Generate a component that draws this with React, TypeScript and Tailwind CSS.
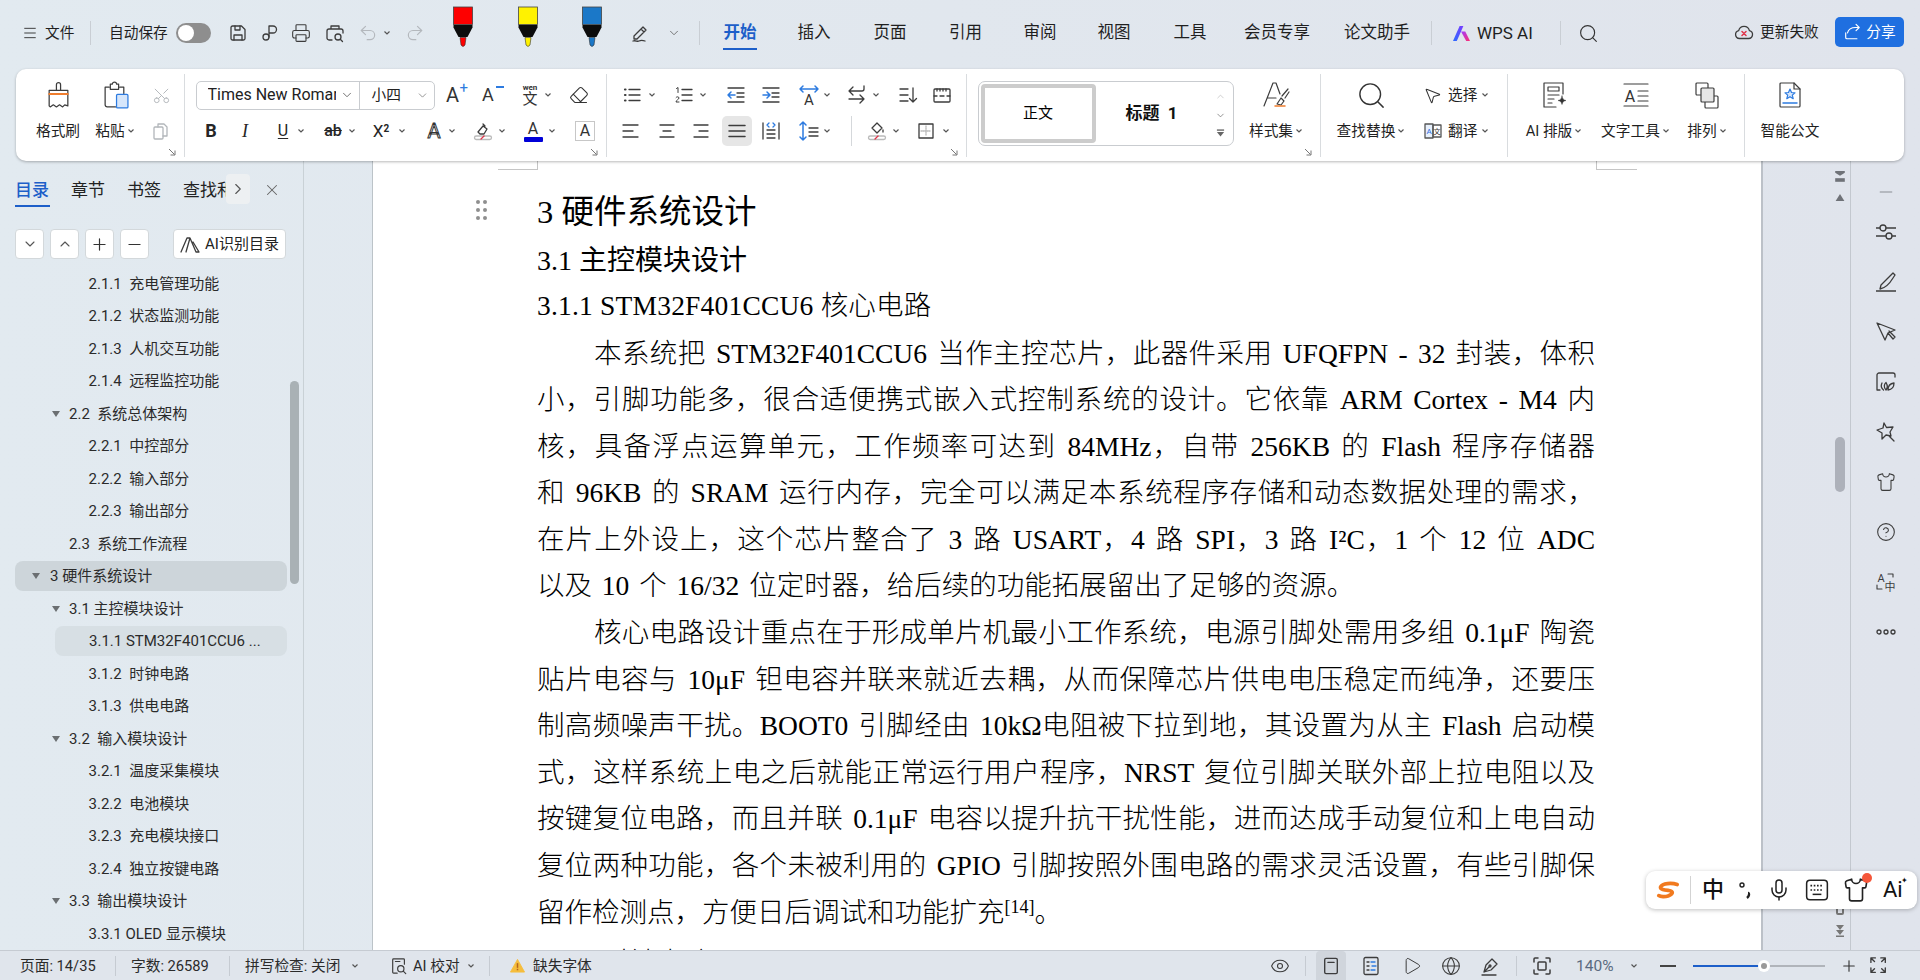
import React from 'react';
import { Menu, Scissors, Printer, Undo2, Redo2, Search, X, Plus, Minus, Eye, Globe, Play, Eraser, CircleHelp, Shirt, ChevronRight, ChevronDown, ChevronUp, MousePointer2, Mic } from 'lucide-react';

const ui = { fontFamily: 'Roboto,"Noto Sans CJK SC",sans-serif' };

function Ic({ c = '', vb = '0 0 20 20', sw = 1.3, stroke = '#3c3c3c', children }: { c?: string; vb?: string; sw?: number; stroke?: string; children: React.ReactNode }) {
  return <svg viewBox={vb} fill="none" stroke={stroke} strokeWidth={sw} strokeLinecap="round" strokeLinejoin="round" className={`shrink-0 ${c || 'w-[20px] h-[20px]'}`}>{children}</svg>;
}
function Chev({ c = '' }: { c?: string }) {
  return <svg viewBox="0 0 8 8" fill="none" stroke="#555" strokeWidth={1.2} className={`w-[8px] h-[8px] shrink-0 ${c}`}><path d="M1.5 2.5 4 5l2.5-2.5" /></svg>;
}
function Corner() {
  return <svg viewBox="0 0 8 8" fill="none" stroke="#777" strokeWidth={1} className="absolute right-[8px] bottom-[1px] w-[8px] h-[8px]"><path d="M1 1l5.5 5.5M7 2.5V7H2.5" /></svg>;
}
function Marker({ color, ml }: { color: string; ml: string }) {
  return (
    <svg viewBox="0 0 22 42" className={`w-[22px] h-[42px] shrink-0 mt-[-12px] ${ml}`}>
      <rect x="1.5" y="1" width="19" height="17.5" fill={color} stroke="#444" strokeWidth="0.8" />
      <path d="M1.5 19h19v2.5L15.5 31h-9L1.5 21.500z" fill="#0c0c0c" />
      <path d="M8 31.500h6L13 39q-2 3-4 0z" fill={color} stroke="#333" strokeWidth="0.6" />
    </svg>
  );
}
const Lab = 'text-[14.7px] leading-[20px] text-[#1f1f1f] whitespace-nowrap';
const Sep = 'w-px h-[24px] bg-[#c9ced4] shrink-0';

function TitleBar() {
  const tab = 'w-[34px] text-center text-[16.5px] leading-[24px] whitespace-nowrap shrink-0 flex justify-center text-[#1f1f1f]';
  return (
    <div className="h-[69px] pb-[3px] flex items-center shrink-0">
      <Menu className="ml-[22px] w-[16px] h-[16px] shrink-0 text-[#333]" strokeWidth={1.4} />
      <span className={`ml-[7px] w-[30px] ${Lab}`}>文件</span>
      <div className={`ml-[15px] ${Sep}`} />
      <span className={`ml-[18px] w-[59px] ${Lab}`}>自动保存</span>
      <div className="ml-[8px] w-[35px] h-[20px] rounded-full bg-[#8e8e8e] shrink-0 flex items-center pl-[2px]"><div className="w-[16px] h-[16px] rounded-full bg-white" /></div>
      <Ic c="ml-[17px] w-[20px] h-[20px]"><path d="M3 4.500A1.500 1.500 0 0 1 4.500 3h9L17 6.500v9a1.500 1.500 0 0 1-1.500 1.500h-11A1.500 1.500 0 0 1 3 15.500z" /><path d="M7 3v4h5V3M6 17v-5h8v5" /></Ic>
      <Ic c="ml-[12px] w-[20px] h-[20px]"><circle cx="6" cy="14" r="3" /><path d="M9 14V3h4a3.500 3.500 0 0 1 0 7H9" /></Ic>
      <Printer className="ml-[11px] w-[20px] h-[20px] shrink-0 text-[#3c3c3c]" strokeWidth={1.3} />
      <Ic c="ml-[14px] w-[20px] h-[20px]"><path d="M6 6V3h8v3M7 17H4a2 2 0 0 1-2-2V8a2 2 0 0 1 2-2h12a2 2 0 0 1 2 2v2" /><circle cx="13" cy="14" r="3" /><path d="m15.500 16.500 2 2" /></Ic>
      <Undo2 className="ml-[13px] w-[20px] h-[20px] shrink-0 text-[#b4b8bd]" strokeWidth={1.4} />
      <Chev c="ml-[5px]" />
      <Redo2 className="ml-[14px] w-[20px] h-[20px] shrink-0 text-[#b4b8bd]" strokeWidth={1.4} />
      <Marker color="#fe0000" ml="ml-[27px]" />
      <Marker color="#fff200" ml="ml-[43px]" />
      <Marker color="#1b78c8" ml="ml-[42px]" />
      <Ic c="ml-[27px] w-[20px] h-[20px]"><path d="M4 13 13 4l3 3-9 9H4zM11 6l3 3M3 18c3-1 4 1 6 0s3-1 6 0" /></Ic>
      <ChevronDown className="ml-[17px] w-[14px] h-[14px] shrink-0 text-[#666]" strokeWidth={1.5} />
      <div className={`ml-[18px] ${Sep}`} />
      <div className={`ml-[23px] relative font-semibold ${tab}`}><span className="text-[#1d5fc9]">开始</span><div className="absolute left-0 right-0 top-[27px] h-[2px] bg-[#1d5fc9]" /></div>
      <div className={`ml-[40px] ${tab}`}>插入</div>
      <div className={`ml-[42px] ${tab}`}>页面</div>
      <div className={`ml-[41.500px] ${tab}`}>引用</div>
      <div className={`ml-[40.500px] ${tab}`}>审阅</div>
      <div className={`ml-[40px] ${tab}`}>视图</div>
      <div className={`ml-[42px] ${tab}`}>工具</div>
      <div className="ml-[36px] w-[68px] text-[16.5px] leading-[24px] text-center whitespace-nowrap shrink-0 text-[#1f1f1f]">会员专享</div>
      <div className="ml-[32px] w-[68px] text-[16.5px] leading-[24px] text-center whitespace-nowrap shrink-0 text-[#1f1f1f]">论文助手</div>
      <div className={`ml-[20px] ${Sep}`} />
      <svg viewBox="0 0 20 18" className="ml-[20px] w-[19px] h-[17px] shrink-0">
        <defs><linearGradient id="wa" x1="0" y1="1" x2="1" y2="0"><stop offset="0" stopColor="#2a6bff" /><stop offset="1" stopColor="#7a3cff" /></linearGradient><linearGradient id="wb" x1="0" y1="0" x2="1" y2="1"><stop offset="0" stopColor="#a03cff" /><stop offset="1" stopColor="#ff2d6f" /></linearGradient></defs>
        <path d="M1 17 8 1h4L5 17z" fill="url(#wa)" /><path d="M9.500 7 14 7 19 17h-4z" fill="url(#wb)" />
      </svg>
      <span className="ml-[6px] w-[59px] text-[17px] leading-[22px] whitespace-nowrap shrink-0 text-[#1f1f1f]">WPS AI</span>
      <div className={`ml-[24px] ${Sep}`} />
      <Search className="ml-[17px] w-[21px] h-[21px] shrink-0 text-[#333]" strokeWidth={1.3} />
      <div className="ml-auto mr-[16px] flex items-center mt-[-2px]">
        <Ic c="w-[20px] h-[20px]" vb="0 0 20 20"><path d="M5.500 16.500a4 4 0 0 1-.8-7.900 5.500 5.500 0 0 1 10.700 0 4 4 0 0 1-.8 7.900z" /><path d="m8 9.500 4 4m0-4-4 4" stroke="#e0354b" strokeWidth="1.5" /></Ic>
        <span className={`ml-[6px] w-[60px] ${Lab}`}>更新失败</span>
        <div className="ml-[15px] w-[69px] h-[30px] rounded-[5px] bg-[#1f6fe0] flex items-center justify-center text-white">
          <Ic c="w-[18px] h-[18px]" stroke="#fff" vb="0 0 20 20"><path d="M3 11v5a1.500 1.500 0 0 0 1.500 1.500h11M5 11c1-4 4-6 9-6h4M14.500 1.500 18 5l-3.500 3.500" /></Ic>
          <span className="ml-[5px] text-[14.7px] leading-[20px] whitespace-nowrap">分享</span>
        </div>
      </div>
    </div>
  );
}

function Ribbon() {
  const group = 'relative h-[83px] mt-[5px] border-r border-[#d9dcdf] shrink-0 pt-[3px]';
  const row = 'h-[36px] flex items-center';
  const col = 'shrink-0 flex flex-col items-center';
  const big = 'h-[36px] flex items-center justify-center';
  const bigLab = 'h-[36px] flex items-center justify-center whitespace-nowrap text-[14.7px] text-[#1f1f1f]';
  const serifText = 'w-[20px] text-center shrink-0 leading-[22px] text-[#262626]';
  return (
    <div className="ml-[16px] w-[1888px] h-[92px] bg-white rounded-[10px] flex shrink-0 relative z-10 shadow-[0_1px_3px_rgba(0,0,0,0.28)]">
      {/* clipboard */}
      <div className={`${group} w-[169px] flex`}>
        <div className={`${col} w-[56px] ml-[14px]`}>
          <div className={big}><Ic c="w-[25px] h-[28px]" vb="0 0 24 27" sw={1.2}><path d="M10 9V3.500a2 2 0 0 1 4 0V9" /><path d="M3 9h18v15l-3-1-2 2-3-2-3 2-3-2-3 2-1-1z" /><path d="M3 12.500h18" stroke="#ef7d2e" strokeWidth="1.8" /></Ic></div>
          <div className={bigLab}>格式刷</div>
        </div>
        <div className={`${col} w-[56px] ml-[1px]`}>
          <div className={big}><Ic c="w-[27px] h-[28px]" vb="0 0 26 27" sw={1.2}><path d="M13 25H5a2 2 0 0 1-2-2V6h4M17 6h4v6" /><path d="M8 3h2a2 2 0 0 1 4 0h2v5H8z" /><rect x="14" y="13" width="11" height="13" rx="1" fill="#d6e6fb" stroke="#2d7be0" /></Ic></div>
          <div className={bigLab}>粘贴<Chev c="ml-[2px]" /></div>
        </div>
        <div className={`${col} w-[20px] ml-[8px]`}>
          <div className={big}><Scissors className="w-[19px] h-[19px] text-[#b2b6ba] -rotate-90" strokeWidth={1.2} /></div>
          <div className={big}><Ic stroke="#b2b6ba"><path d="M7 6V3h6l3 3v9h-4" /><rect x="3" y="6" width="9" height="12" rx="1" /></Ic></div>
        </div>
        <Corner />
      </div>
      {/* font */}
      <div className={`${group} w-[422px]`}>
        <div className={row}>
          <div className="ml-[10.500px] w-[239.500px] h-[29px] border border-[#c9ccd0] rounded-[5px] flex items-center shrink-0">
            <span className="ml-[11px] w-[128px] overflow-hidden whitespace-nowrap text-[16px] text-[#222]">Times New Roman</span>
            <ChevronDown className="ml-[4px] w-[14px] h-[14px] text-[#555] shrink-0" strokeWidth={1.4} />
            <div className="ml-[5px] w-px h-full bg-[#c9ccd0]" />
            <span className="ml-[12px] text-[14.7px] whitespace-nowrap text-[#222]">小四</span>
            <ChevronDown className="ml-[15px] w-[13px] h-[13px] text-[#777] shrink-0" strokeWidth={1.4} />
          </div>
          <div className="ml-[11px] w-[22px] flex items-start shrink-0 relative h-[22px]"><span className="text-[20px] leading-[22px] text-[#333]">A</span><span className="absolute right-[0px] top-[-3px] text-[15px] leading-[15px] text-[#2d7be0]">+</span></div>
          <div className="ml-[14px] w-[22px] flex items-start shrink-0 relative h-[22px]"><span className="text-[18px] leading-[22px] text-[#333]">A</span><span className="absolute right-[0px] top-[2px] w-[8px] h-[2px] bg-[#2d7be0]" /></div>
          <div className="ml-[15px] w-[22px] flex flex-col items-center shrink-0 leading-none text-[#333]"><span className="text-[8px] leading-[8px] font-bold">wen</span><span className="text-[15px] leading-[15px]">文</span></div>
          <Chev c="ml-[3px]" />
          <Eraser className="ml-[17px] w-[20px] h-[20px] shrink-0 text-[#333]" strokeWidth={1.3} />
        </div>
        <div className={row}>
          <span className={`ml-[16px] font-bold text-[18px] ${serifText}`}>B</span>
          <span className={`ml-[14px] italic text-[18px] ${serifText}`} style={{ fontFamily: '"Liberation Serif",serif' }}>I</span>
          <span className={`ml-[18px] text-[16px] underline underline-offset-2 ${serifText}`}>U</span>
          <Chev c="ml-[4px]" />
          <span className={`ml-[18px] text-[16px] line-through font-medium ${serifText}`}>ab</span>
          <Chev c="ml-[5px]" />
          <span className={`ml-[13px] text-[17px] w-[24px] text-center shrink-0 leading-[22px] text-[#262626]`}>X<sup className="text-[10px] font-bold">2</sup></span>
          <Chev c="ml-[5px]" />
          <div className="ml-[18px] w-[20px] h-[22px] shrink-0 relative flex justify-center"><span className="text-[20px] leading-[22px] text-white [-webkit-text-stroke:1px_#333]">A</span></div>
          <Chev c="ml-[4px]" />
          <Ic c="ml-[17px] w-[20px] h-[20px]"><path d="m5 11 5-6 4 3-3 5H7zM10 3l2 2" /><rect x="1.500" y="15" width="17" height="3.500" rx="1.750" stroke="#bbb" /><path d="m8 18 3-3" stroke="#e0354b" /></Ic>
          <Chev c="ml-[5px]" />
          <div className="ml-[17px] w-[20px] flex flex-col items-center shrink-0"><span className="text-[16px] leading-[16px] text-[#333]">A</span><div className="w-[19px] h-[5px] rounded-[1px] bg-[#0000d8]" /></div>
          <Chev c="ml-[5px]" />
          <div className="ml-[19px] w-[20px] h-[20px] border border-[#c7c7c7] shrink-0 flex items-center justify-center text-[16px] leading-[18px] text-[#333]">A</div>
        </div>
        <Corner />
      </div>
      {/* paragraph */}
      <div className={`${group} w-[360px]`}>
        <div className={row}>
          <Ic c="ml-[15px] w-[20px] h-[20px]"><path d="M7 4.500h11M7 10h11M7 15.500h11" /><path d="M3 4.500h.5M3 10h.5M3 15.500h.5" strokeWidth="2.200" /></Ic>
          <Chev c="ml-[6px]" />
          <Ic c="ml-[18px] w-[20px] h-[20px]"><path d="M8 4.500h10M8 10h10M8 15.500h10" /><path d="M2.500 3.500l1.500-1v5" strokeWidth="1" /><path d="M2 12.500c.5-1 3-1 3 .5s-3 2-3 4h3" strokeWidth="1" /></Ic>
          <Chev c="ml-[5px]" />
          <Ic c="ml-[19px] w-[20px] h-[20px]"><path d="M2 3h16M2 17h16M11 8h7M11 12h7" /><path d="M9 10H2m3-3-3 3 3 3" stroke="#2d7be0" strokeWidth="1.5" /></Ic>
          <Ic c="ml-[15px] w-[20px] h-[20px]"><path d="M2 3h16M2 17h16M11 8h7M11 12h7" /><path d="M2 10h7M6 7l3 3-3 3" stroke="#2d7be0" strokeWidth="1.5" /></Ic>
          <Ic c="ml-[17px] w-[22px] h-[22px]" vb="0 0 22 22"><path d="M2 5h18M5 2 2 5l3 3M17 2l3 3-3 3" stroke="#2d7be0" strokeWidth="1.5" /><text x="11" y="20.500" textAnchor="middle" fontSize="15" fill="#333" stroke="none" fontFamily="Roboto">A</text></Ic>
          <Chev c="ml-[3px]" />
          <Ic c="ml-[15px] w-[22px] h-[22px]" vb="0 0 22 22"><path d="M3 7h13a2 2 0 0 0 2-2V2M7 3 3 7l4 4M3 15h15m-4-4 4 4-4 4" /></Ic>
          <Chev c="ml-[4px]" />
          <Ic c="ml-[18px] w-[20px] h-[20px]"><path d="M2 4h8M2 10h8M2 16h8M15 3v14m-3.500-3.500L15 17l3.500-3.500" /></Ic>
          <Ic c="ml-[14px] w-[20px] h-[20px]"><rect x="2" y="4" width="16" height="13" rx="1" /><path d="M5 4v2M8 4v2M11 4v2M14 4v2M2 11h3M15 11h3M8 11h4" /></Ic>
        </div>
        <div className={row}>
          <Ic c="ml-[14px] w-[20px] h-[20px]"><path d="M2 4h15M2 10h10M2 16h15" /></Ic>
          <Ic c="ml-[15.500px] w-[20px] h-[20px]"><path d="M3 4h14M6 10h8M3 16h14" /></Ic>
          <Ic c="ml-[14.500px] w-[20px] h-[20px]"><path d="M3 4h14M8 10h9M3 16h14" /></Ic>
          <div className="ml-[11px] w-[29.500px] h-[30px] rounded-[5px] bg-[#e6e6e6] flex items-center justify-center shrink-0"><Ic sw={1.5}><path d="M2 4.500h16M2 10h16M2 15.500h16" /></Ic></div>
          <Ic c="ml-[9.500px] w-[20px] h-[20px]"><path d="M2 2v16M18 2v16M6 9h8M6 13h8M6 17h8" /><path d="M8 2 6 4l2 2M12 2l2 2-2 2" stroke="#2d7be0" /></Ic>
          <Ic c="ml-[17px] w-[22px] h-[22px]" vb="0 0 22 22"><path d="M11 8h9M11 12h9M11 16h9" /><path d="M5 2v18M2 5l3-3 3 3M2 17l3 3 3-3" stroke="#2d7be0" strokeWidth="1.500" /></Ic>
          <Chev c="ml-[3px]" />
          <div className="ml-[19.500px] w-px h-[30px] bg-[#d5d8db] shrink-0" />
          <Ic c="ml-[15px] w-[20px] h-[20px]"><path d="m5 7 5-5 5 5-5 5zM16 9v2" /><rect x="1.500" y="15" width="17" height="3.500" rx="1.750" stroke="#bbb" /><path d="m8 18 3-3" stroke="#e0354b" /></Ic>
          <Chev c="ml-[5px]" />
          <Ic c="ml-[16.500px] w-[20px] h-[20px]"><rect x="3" y="3" width="14" height="14" /><path d="M10 5v10M5 10h10" stroke="#bbb" strokeDasharray="1 1" /></Ic>
          <Chev c="ml-[5.500px]" />
        </div>
        <Corner />
      </div>
      {/* styles */}
      <div className={`${group} w-[354px] flex`}>
        <div className="ml-[10.500px] mt-[4px] w-[256.500px] h-[65px] border border-[#c9ccd0] rounded-[7px] flex items-center shrink-0 pl-[2px]">
          <div className="w-[115px] h-[59px] border-[4px] border-[#cccccc] rounded-[4px] flex items-center justify-center text-[15px] text-black" style={{ fontFamily: '"Liberation Serif","Noto Sans CJK SC",serif' }}>正文</div>
          <div className="w-[112px] text-center text-[17px] font-bold text-[#111] whitespace-pre shrink-0">标题  1</div>
          <div className="flex-1 flex flex-col items-center gap-[8px]">
            <ChevronUp className="w-[11px] h-[11px] text-[#bbb]" strokeWidth={1.5} />
            <ChevronDown className="w-[11px] h-[11px] text-[#666]" strokeWidth={1.5} />
            <svg viewBox="0 0 10 8" className="w-[9px] h-[8px]" fill="#666"><rect x="1" y="0" width="8" height="1.500" /><path d="M1 3h8L5 8z" /></svg>
          </div>
        </div>
        <div className={`${col} w-[70px] ml-[7px]`}>
          <div className={big}><Ic c="w-[30px] h-[30px]" vb="0 0 30 30" sw={1.2}><path d="M3 26 12 3h3l4 11M7 18h8" /><path d="m16 24 4-6 3 3-3 4zM21 16 27 9M24 18l4-6" /><path d="M14 26h10" stroke="#ef7d2e" strokeWidth="1.500" /></Ic></div>
          <div className={bigLab}>样式集<Chev c="ml-[2px]" /></div>
        </div>
        <Corner />
      </div>
      {/* find */}
      <div className={`${group} w-[187px] flex`}>
        <div className={`${col} w-[76px] ml-[12px]`}>
          <div className={big}><Search className="w-[31px] h-[31px] text-[#333]" strokeWidth={1.1} /></div>
          <div className={bigLab}>查找替换<Chev c="ml-[2px]" /></div>
        </div>
        <div className="ml-[14px] shrink-0">
          <div className={row}><MousePointer2 className="w-[19px] h-[19px] text-[#333] shrink-0" strokeWidth={1.3} /><span className={`ml-[6px] ${Lab}`}>选择</span><Chev c="ml-[4px]" /></div>
          <div className={row}><Ic c="w-[20px] h-[20px]"><rect x="2" y="3" width="8" height="14" fill="#e7f0fc" stroke="#555" /><rect x="10" y="4" width="8" height="12" stroke="#555" /><text x="6" y="13" textAnchor="middle" fontSize="8" fill="#2d6be0" stroke="none" fontFamily="Roboto">A</text><text x="14" y="13" textAnchor="middle" fontSize="7" fill="#333" stroke="none" fontFamily="Noto Sans CJK SC">文</text></Ic><span className={`ml-[5px] ${Lab}`}>翻译</span><Chev c="ml-[4px]" /></div>
        </div>
      </div>
      {/* tools */}
      <div className={`${group} w-[237px] flex`}>
        <div className={`${col} w-[64px] ml-[14px]`}>
          <div className={big}><Ic c="w-[26px] h-[28px]" vb="0 0 26 28" sw={1.2}><path d="M22 13V2H3v24h12" /><rect x="7" y="6" width="11" height="4" /><path d="M7 14h11M7 18h6M7 22h4" /><path d="M21 15c.5 3 1.500 4 4 4.500-2.500.5-3.500 1.500-4 4-.5-2.500-1.500-3.500-4-4 2.500-.5 3.500-1.500 4-4.500z" fill="#333" strokeWidth="0.5" /></Ic></div>
          <div className={bigLab}>AI 排版<Chev c="ml-[2px]" /></div>
        </div>
        <div className={`${col} w-[75px] ml-[12px]`}>
          <div className={big}><Ic c="w-[26px] h-[26px]" vb="0 0 26 26" sw={1.2}><path d="M1 2h24M1 24h24M15 9h10M15 14h10M15 19h10" /><text x="7" y="20" textAnchor="middle" fontSize="16" fill="#333" stroke="none" fontFamily="Roboto">A</text></Ic></div>
          <div className={bigLab}>文字工具<Chev c="ml-[2px]" /></div>
        </div>
        <div className={`${col} w-[44px] ml-[12px]`}>
          <div className={big}><Ic c="w-[26px] h-[28px]" vb="0 0 26 28" sw={1.2}><rect x="2" y="2" width="12" height="12" rx="1" /><rect x="11" y="15" width="13" height="12" rx="1" /><rect x="7" y="7" width="13" height="14" rx="1" fill="#e6e6e6" /></Ic></div>
          <div className={bigLab}>排列<Chev c="ml-[2px]" /></div>
        </div>
      </div>
      {/* ai doc */}
      <div className="mt-[5px] pt-[3px] shrink-0 ml-[13px] w-[64px] flex flex-col items-center">
        <div className={big}><Ic c="w-[24px] h-[28px]" vb="0 0 24 28" sw={1.2}><path d="M16 2H3a1 1 0 0 0-1 1v22a1 1 0 0 0 1 1h18a1 1 0 0 0 1-1V8z" /><path d="M16 2v6h6" /><path d="m12 8 1.500 3.500 3.500.3-2.700 2.300.9 3.600-3.200-2-3.200 2 .9-3.600L7 11.800l3.500-.3z" stroke="#2d7be0" fill="#d6e6fb" /><path d="M5 22h14" stroke="#2d7be0" strokeWidth="1.500" /></Ic></div>
        <div className={bigLab}>智能公文</div>
      </div>
    </div>
  );
}

type TreeItem = { t: string; lvl: 0 | 1 | 2; tri?: boolean; sel?: boolean };
const tree: TreeItem[] = [
  { t: '2.1.1  充电管理功能', lvl: 2 }, { t: '2.1.2  状态监测功能', lvl: 2 }, { t: '2.1.3  人机交互功能', lvl: 2 }, { t: '2.1.4  远程监控功能', lvl: 2 },
  { t: '2.2  系统总体架构', lvl: 1, tri: true }, { t: '2.2.1  中控部分', lvl: 2 }, { t: '2.2.2  输入部分', lvl: 2 }, { t: '2.2.3  输出部分', lvl: 2 },
  { t: '2.3  系统工作流程', lvl: 1 }, { t: '3 硬件系统设计', lvl: 0, tri: true, sel: true }, { t: '3.1 主控模块设计', lvl: 1, tri: true },
  { t: '3.1.1 STM32F401CCU6 ...', lvl: 2, sel: true }, { t: '3.1.2  时钟电路', lvl: 2 }, { t: '3.1.3  供电电路', lvl: 2 },
  { t: '3.2  输入模块设计', lvl: 1, tri: true }, { t: '3.2.1  温度采集模块', lvl: 2 }, { t: '3.2.2  电池模块', lvl: 2 }, { t: '3.2.3  充电模块接口', lvl: 2 }, { t: '3.2.4  独立按键电路', lvl: 2 },
  { t: '3.3  输出模块设计', lvl: 1, tri: true }, { t: '3.3.1 OLED 显示模块', lvl: 2 },
];
function Tri({ c }: { c: string }) {
  return <svg viewBox="0 0 8 6" fill="#6b6f72" className={`w-[8px] h-[6px] shrink-0 ${c}`}><path d="M0 0h8L4 6z" /></svg>;
}
function TreeRow({ it }: { it: TreeItem }) {
  const txt = 'text-[15px] leading-[20px] text-[#2b2b2b] whitespace-pre';
  let inner: React.ReactNode;
  if (it.lvl === 0) inner = <div className="ml-[15px] w-[272px] h-[30px] rounded-[8px] bg-[#cdd5da] flex items-center"><Tri c="ml-[17px]" /><span className={`ml-[10px] ${txt}`}>{it.t}</span></div>;
  else if (it.lvl === 1) inner = <div className="flex items-center">{it.tri ? <Tri c="ml-[52px]" /> : <div className="w-[60px] shrink-0" />}<span className={`ml-[9px] ${txt}`}>{it.t}</span></div>;
  else if (it.sel) inner = <div className="ml-[55px] w-[232px] h-[30px] rounded-[8px] bg-[#d7dfe4] flex items-center"><span className={`ml-[34px] ${txt}`}>{it.t}</span></div>;
  else inner = <span className={`ml-[88.500px] ${txt}`}>{it.t}</span>;
  return <div className="h-[32.500px] flex items-center shrink-0">{inner}</div>;
}
function Sidebar() {
  const btn = 'w-[29px] h-[30px] bg-white border border-[#d3d8db] rounded-[4px] flex items-center justify-center shrink-0';
  const tab = 'text-[17px] leading-[24px] whitespace-nowrap shrink-0 text-[#222]';
  return (
    <div className="relative w-[304px] shrink-0 border-r border-[#c9d1d6] overflow-hidden flex flex-col">
      <div className="h-[46px] pt-[13px] flex shrink-0">
        <div className={`ml-[15px] w-[35px] h-[33px] border-b-2 border-[#1d5fc9] pt-[4px] font-medium ${tab}`}><span className="text-[#1d5fc9]">目录</span></div>
        <div className={`ml-[21px] pt-[4px] ${tab}`}>章节</div>
        <div className={`ml-[22px] pt-[4px] ${tab}`}>书签</div>
        <div className={`ml-[22px] pt-[4px] w-[43px] overflow-hidden ${tab}`}>查找和替换</div>
        <div className="w-[24px] h-[30px] rounded-[4px] bg-[#edf0f2] flex items-center justify-center shrink-0"><ChevronRight className="w-[18px] h-[18px] text-[#555]" strokeWidth={1.5} /></div>
        <X className="ml-[13px] mt-[7px] w-[18px] h-[18px] shrink-0 text-[#666]" strokeWidth={1.4} />
      </div>
      <div className="mt-[22px] ml-[15px] flex gap-[6px] shrink-0">
        <div className={btn}><ChevronDown className="w-[16px] h-[16px] text-[#555]" strokeWidth={1.6} /></div>
        <div className={btn}><ChevronUp className="w-[16px] h-[16px] text-[#555]" strokeWidth={1.6} /></div>
        <div className={btn}><Plus className="w-[19px] h-[19px] text-[#333]" strokeWidth={1.5} /></div>
        <div className={btn}><Minus className="w-[19px] h-[19px] text-[#333]" strokeWidth={1.5} /></div>
        <div className="ml-[18px] w-[113px] h-[30px] bg-white border border-[#d3d8db] rounded-[4px] flex items-center justify-center shrink-0">
          <Ic c="w-[20px] h-[17px]" vb="0 0 20 17" sw={1.3}><path d="M1 16 7 2h3l6 14M10 2 6 16M16 16h3L13 6" /></Ic>
          <span className="ml-[5px] text-[15px] leading-[20px] whitespace-nowrap text-[#222]">AI识别目录</span>
        </div>
      </div>
      <div className="mt-[8.500px] flex flex-col">{tree.map((it) => <TreeRow key={it.t} it={it} />)}</div>
      <div className="absolute left-[290px] top-[220px] w-[9px] h-[203px] rounded-full bg-[#a9b1b5]" />
    </div>
  );
}

const lines: string[] = [
  '本系统把 STM32F401CCU6 当作主控芯片，此器件采用 UFQFPN - 32 封装，体积',
  '小，引脚功能多，很合适便携式嵌入式控制系统的设计。它依靠 ARM Cortex - M4 内',
  '核，具备浮点运算单元，工作频率可达到 84MHz，自带 256KB 的 Flash 程序存储器',
  '和 96KB 的 SRAM 运行内存，完全可以满足本系统程序存储和动态数据处理的需求，',
  '在片上外设上，这个芯片整合了 3 路 USART，4 路 SPI，3 路 I²C，1 个 12 位 ADC',
];
const lines2: string[] = [
  '贴片电容与 10μF 钽电容并联来就近去耦，从而保障芯片供电电压稳定而纯净，还要压',
  '制高频噪声干扰。BOOT0 引脚经由 10kΩ电阻被下拉到地，其设置为从主 Flash 启动模',
  '式，这样系统上电之后就能正常运行用户程序，NRST 复位引脚关联外部上拉电阻以及',
  '按键复位电路，而且并联 0.1μF 电容以提升抗干扰性能，进而达成手动复位和上电自动',
  '复位两种功能，各个未被利用的 GPIO 引脚按照外围电路的需求灵活设置，有些引脚保',
];
function Page() {
  const ln = 'h-[46.600px] leading-[46.600px] whitespace-nowrap';
  const just = `${ln} text-justify [text-align-last:justify]`;
  return (
    <div className="relative w-[1388px] shrink-0 bg-white overflow-hidden pl-[164px] pr-[166px] text-black font-light" style={{ fontFamily: '"Liberation Serif","Noto Sans CJK SC",serif' }}>
      <div className="absolute left-[125px] top-[0px] w-[40px] h-[9px] border-b border-r border-[#c5c5c5]" />
      <div className="absolute left-[1223px] top-[0px] w-[41px] h-[9px] border-b border-l border-[#c5c5c5]" />
      <div className="absolute left-[103px] top-[39px] grid grid-cols-2 gap-x-[3px] gap-y-[4px]">
        {[0, 1, 2, 3, 4, 5].map((i) => <div key={i} className="w-[4px] h-[4px] rounded-full bg-[#8f8f8f]" />)}
      </div>
      <div className="mt-[28px] h-[46px] leading-[46px] text-[32.500px] font-normal">3 硬件系统设计</div>
      <div className="mt-[3px] h-[46px] leading-[46px] text-[28px] font-normal">3.1 主控模块设计</div>
      <div className="h-[44px] leading-[44px] text-[27.500px] tracking-[0.2px] whitespace-pre">3.1.1 STM32F401CCU6 核心电路</div>
      <div className="mt-[2.500px] text-[27.500px] [word-spacing:3px]">
        <div className={`${just} indent-[57px]`}>{lines[0]}</div>
        {lines.slice(1).map((l, i) => <div key={i} className={just}>{l}</div>)}
        <div className={ln}>以及 10 个 16/32 位定时器，给后续的功能拓展留出了足够的资源。</div>
        <div className={`${just} indent-[57px]`}>核心电路设计重点在于形成单片机最小工作系统，电源引脚处需用多组 0.1μF 陶瓷</div>
        {lines2.map((l, i) => <div key={i} className={just}>{l}</div>)}
        <div className={ln}>留作检测点，方便日后调试和功能扩充<sup className="text-[18px] leading-none">[14]</sup>。</div>
        <div className={`${ln} mt-[4px]`}>3.1.2 时钟电路</div>
      </div>
    </div>
  );
}

function RightStrip() {
  const g = 'w-[14px] h-[12px] shrink-0';
  return (
    <div className="relative w-[89px] shrink-0 border-l-2 border-[#bcc1c8] flex flex-col items-center">
      <div className="ml-[66px] flex flex-col items-center">
        <svg viewBox="0 0 10 10" className={`mt-[10px] ${g}`} fill="#6f7278"><path d="M1 0h8v1.500L5 4 1 1.500z" /><rect x="1" y="6" width="8" height="3" /></svg>
        <svg viewBox="0 0 10 8" className="mt-[11px] w-[10px] h-[7px] shrink-0" fill="#6f7278"><path d="M5 0l5 8H0z" /></svg>
        <div className="mt-[236px] w-[10px] h-[55px] rounded-full bg-[#adb1ba]" />
        <div className="mt-[415px] w-[8px] h-[8px] border-2 border-[#777] rounded-[2px]" />
        <svg viewBox="0 0 10 12" className="mt-[10px] w-[10px] h-[12px]" fill="#777"><path d="M1 0h8L5 5zM1 5h8l-4 5z" /><rect x="1" y="10.500" width="8" height="1.500" /></svg>
      </div>
    </div>
  );
}
function RightRail() {
  const items = 'mt-[30px]';
  return (
    <div className="w-[70px] shrink-0 border-l border-[#c3c8cf] flex flex-col items-center pt-[21px]">
      <Minus className="w-[20px] h-[20px] text-[#8a8e94]" strokeWidth={1.2} />
      <Ic c="mt-[20px] w-[20px] h-[20px]"><path d="M0 6h4M10 6h10M0 14h10M16 14h4" /><circle cx="7" cy="6" r="3" /><circle cx="13" cy="14" r="3" /></Ic>
      <Ic c={`${items} w-[20px] h-[20px]`}><path d="M0 19h20M4 17c6-1 10-6 13-11l2-3-2-2-2 2-10 10z" /></Ic>
      <Ic c={`${items} w-[20px] h-[20px]`}><path d="M1 1l18 7-7 3-3 7zM12 11l5 6 2-2-6-6" /></Ic>
      <Ic c={`${items} w-[20px] h-[20px]`}><path d="M1 18V3c0-1 1-2 2-2h14c1 0 2 1 2 2v2M1 18h3" /><path d="M10 18c-2.500-2.500-2-6 0-7.500 1.500 2.500 2 5 0 7.500zm2 0c0-4 2-6.500 6-7 0 4-2 6.500-6 7zM7.500 18C5 16 5 13 6 11" /></Ic>
      <Ic c={`${items} w-[20px] h-[20px]`}><path d="M8 1l2.500 4.500L17 5l-3 5 1 4-5-1-4 4v-6L1 8l6-2zM13 14l5 5" /></Ic>
      <Shirt className={`${items} w-[20px] h-[20px] text-[#3c3c3c]`} strokeWidth={1.3} />
      <CircleHelp className={`${items} w-[20px] h-[20px] text-[#3c3c3c]`} strokeWidth={1.3} />
      <Ic c={`${items} w-[20px] h-[20px]`} sw={1.1}><path d="M12 2h5v3M1 13v4h5" /><text x="5" y="10" textAnchor="middle" fontSize="11" fill="#3c3c3c" stroke="none" fontFamily="Roboto">A</text><text x="14" y="19" textAnchor="middle" fontSize="11" fill="#3c3c3c" stroke="none" fontFamily="Noto Sans CJK SC">中</text></Ic>
      <Ic c={`${items} w-[20px] h-[20px]`}><circle cx="3" cy="10" r="2" /><circle cx="10" cy="10" r="2" /><circle cx="17" cy="10" r="2" /></Ic>
    </div>
  );
}
function StatusBar() {
  const t = 'text-[14.7px] leading-[20px] whitespace-nowrap text-[#2b2b2b] shrink-0';
  const d = 'w-px h-[20px] bg-[#c6cbd2] shrink-0';
  return (
    <div className="relative z-10 h-[30px] bg-[#e0e5ec] border-t border-[#c6cbd2] flex items-center shrink-0">
      <span className={`ml-[20px] w-[80px] ${t}`}>页面: 14/35</span>
      <div className={`ml-[15px] ${d}`} />
      <span className={`ml-[15px] w-[83px] ${t}`}>字数: 26589</span>
      <div className={`ml-[15px] ${d}`} />
      <span className={`ml-[15px] w-[100px] ${t}`}>拼写检查: 关闭</span>
      <Chev c="ml-[6px]" />
      <Ic c="ml-[31px] w-[18px] h-[20px]"><path d="M8 18H4a1 1 0 0 1-1-1V3a1 1 0 0 1 1-1h11a1 1 0 0 1 1 1v5M6 5h5" /><circle cx="12" cy="13" r="3.500" /><path d="m15 16 2.500 2.500" /></Ic>
      <span className={`ml-[5px] w-[50px] ${t}`}>AI 校对</span>
      <Chev c="ml-[4px]" />
      <div className={`ml-[14px] ${d}`} />
      <svg viewBox="0 0 16 15" className="ml-[20px] w-[15px] h-[15px] shrink-0"><path d="M8 1 15.500 14.500H.5z" fill="#f5bd3d" stroke="#f5bd3d" strokeLinejoin="round" /><rect x="7.200" y="5" width="1.600" height="5" fill="#b5651d" /><rect x="7.200" y="11" width="1.600" height="1.600" fill="#b5651d" /></svg>
      <span className={`ml-[8px] ${t}`}>缺失字体</span>
      <div className="ml-auto mr-[32px] h-full flex items-center">
        <Eye className="w-[20px] h-[20px] text-[#3c3c3c]" strokeWidth={1.3} />
        <div className={`ml-[15px] ${d}`} />
        <div className="ml-[10px] w-[30px] h-full rounded-t-[4px] bg-[#d0d5dc] flex items-center justify-center shrink-0"><Ic c="w-[18px] h-[20px]"><rect x="3" y="1.500" width="14" height="17" rx="1.500" strokeWidth="1.500" /><path d="M6.500 6h7" /></Ic></div>
        <Ic c="ml-[15px] w-[20px] h-[20px]"><rect x="3" y="1.500" width="14" height="17" rx="1.500" /><path d="M6 6h2M6 10h2M6 14h2" /><path d="M10 6h4M11 10h4M10 14h4" stroke="#2d7be0" /></Ic>
        <Play className="ml-[21px] w-[20px] h-[20px] text-[#3c3c3c]" strokeWidth={1.2} />
        <Globe className="ml-[19px] w-[20px] h-[20px] text-[#3c3c3c]" strokeWidth={1.3} />
        <Ic c="ml-[20px] w-[20px] h-[20px]"><path d="M3 16 5 9l6-6 5 5-6 6zM3 16l5-5M1 19h14" /><circle cx="9" cy="10" r="1" /></Ic>
        <div className={`ml-[15px] ${d}`} />
        <Ic c="ml-[15px] w-[20px] h-[20px]" sw={1.5}><path d="M2 6V3a1 1 0 0 1 1-1h3M14 2h3a1 1 0 0 1 1 1v3M18 14v3a1 1 0 0 1-1 1h-3M6 18H3a1 1 0 0 1-1-1v-3" /><rect x="6" y="6" width="8" height="8" rx="1" /></Ic>
        <span className="ml-[24px] w-[40px] text-[15.5px] leading-[20px] text-[#5a6a80] shrink-0">140%</span>
        <Chev c="ml-[14px]" />
        <div className="ml-[22px] w-[16px] h-[2px] bg-[#444] shrink-0" />
        <div className="ml-[17px] w-[132px] h-[2px] bg-[#b0b4ba] relative shrink-0">
          <div className="w-[66px] h-[2px] bg-[#1d5fc9]" />
          <div className="absolute left-[65px] top-[-5px] w-[12px] h-[12px] rounded-full bg-white flex items-center justify-center"><div className="w-[6px] h-[6px] rounded-full bg-[#999]" /></div>
        </div>
        <Plus className="ml-[15px] w-[18px] h-[18px] text-[#333] shrink-0" strokeWidth={1.5} />
        <Ic c="ml-[12px] w-[18px] h-[18px]" sw={1.5}><path d="M1 6V1h5M12 1h5v5M17 12v5h-5M6 17H1v-5M1 1l4 4M17 1l-4 4M17 17l-4-4M1 17l4-4" /></Ic>
      </div>
    </div>
  );
}
function Ime() {
  return (
    <div className="absolute left-[1646px] top-[871px] w-[271px] h-[38px] bg-white rounded-[9px] shadow-[0_1px_4px_rgba(0,0,0,0.25)] flex items-center z-20">
      <svg viewBox="0 0 26 20" className="ml-[10px] w-[24px] h-[19px] shrink-0" fill="none" stroke="#f17a1f" strokeWidth="4" strokeLinecap="round"><path d="M23 3.500C17 1.500 7 2 5 6c-1 3 5 3.500 9 4s6 3-1 6c-3 1-8 1-10-.5" /></svg>
      <div className="ml-[10px] w-px h-[28px] bg-[#d3d3d3] shrink-0" />
      <span className="ml-[11px] text-[22px] leading-[26px] text-[#111] shrink-0 font-medium">中</span>
      <svg viewBox="0 0 14 20" className="ml-[14px] w-[14px] h-[20px] shrink-0" fill="none" stroke="#222" strokeWidth="1.400"><circle cx="4" cy="5" r="2" /><path d="M10 13c1.500 0 1.500 3-1 5" strokeWidth="2.400" /></svg>
      <Mic className="ml-[15px] w-[24px] h-[24px] shrink-0 text-[#222]" strokeWidth={1.5} />
      <svg viewBox="0 0 22 22" className="ml-[14px] w-[24px] h-[24px] shrink-0" fill="none" stroke="#222" strokeWidth="1.400"><rect x="1.500" y="2" width="19" height="18" rx="3" /><path d="M5 7h12M5 11h12" strokeDasharray="1.500 1.500" /><path d="M7 15h8" /></svg>
      <div className="ml-[14px] relative w-[26px] h-[26px] shrink-0"><Shirt className="w-[26px] h-[26px] text-[#222]" strokeWidth={1.5} /><div className="absolute right-[-3px] top-[-4px] w-[10px] h-[10px] rounded-full bg-[#f5563a]" /></div>
      <div className="ml-[14px] relative text-[22px] leading-[24px] text-[#111] shrink-0">Ai<span className="absolute right-[-5px] top-[-2px] text-[8px] leading-[10px]">✦</span></div>
    </div>
  );
}

export default function App() {
  return (
    <div className="relative w-[1920px] h-[980px] overflow-hidden flex flex-col bg-linear-to-r from-[#e2eaf0] to-[#e0e4ec]" style={ui}>
      <TitleBar />
      <Ribbon />
      <div className="flex h-[789px] shrink-0 overflow-hidden">
        <Sidebar />
        <div className="w-[69px] shrink-0 border-r border-[#bcc3c8]" />
        <Page />
        <RightStrip />
        <RightRail />
      </div>
      <StatusBar />
      <Ime />
    </div>
  );
}
